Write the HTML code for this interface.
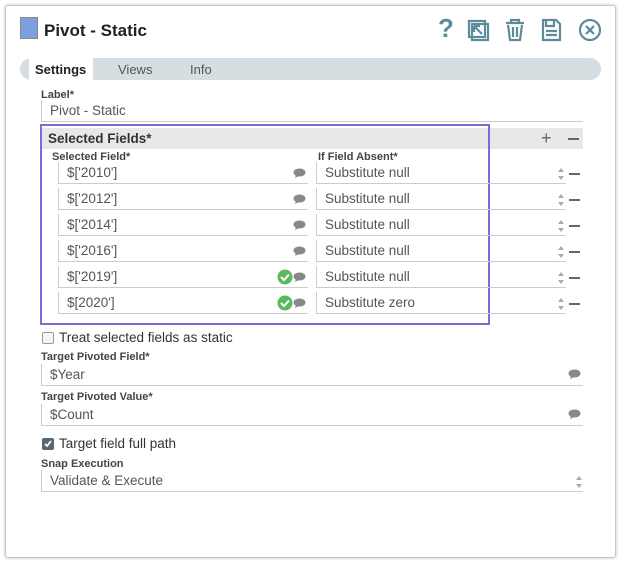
<!DOCTYPE html><html><head><meta charset="utf-8"><style>
*{box-sizing:border-box;margin:0;padding:0}
body{width:622px;height:563px;background:#fff;font-family:"Liberation Sans",sans-serif;position:relative;overflow:hidden}
.dlg{position:absolute;left:5px;top:5px;width:611px;height:553px;border:1px solid #c8c8c8;border-radius:3px;box-shadow:0 0 3px rgba(0,0,0,.25);background:#fff}
.a{position:absolute}
.lbl{position:absolute;font-size:11px;font-weight:bold;color:#444}
.inp{position:absolute;border-left:1px solid #ccc;border-bottom:1px solid #ccc;height:22px;font-size:13.5px;color:#555;padding-left:8px;line-height:22px}
.bub{position:absolute;width:13px;height:10px}
.sp{position:absolute;width:8px;height:14px}
.mn{position:absolute;width:11px;height:2px;background:#666}
.cb{position:absolute;width:12px;height:12px;border:1px solid #999;border-radius:2px;background:#f4f6f8}
.ck{position:absolute}
</style></head><body>
<div class="dlg"></div>
<div class="a" style="left:20px;top:17px;width:18px;height:22px;background:#7b9fe0;border:1px solid #888"></div>
<div class="a" style="left:44px;top:21px;font-size:17px;font-weight:bold;color:#222">Pivot - Static</div>
<svg class="a" style="left:436px;top:16px" width="170" height="28" viewBox="0 0 170 28" fill="none" stroke="#5f8a99" stroke-width="2.2">
<text x="2" y="21" font-size="26" font-family="Liberation Sans" font-weight="bold" fill="#5f8a99" stroke="none">?</text>
<rect x="33" y="5" width="16" height="16"/><rect x="36" y="8" width="16" height="16"/><path d="M46 18 L38 10 M38 10 h6 M38 10 v6"/>
<path d="M70 7 h18 M75 7 v-3 h8 v3 M72 9 l2 15 h10 l2 -15 M77 11 v10 M81 11 v10"/>
<path d="M107 4 h13 l4 4 v16 h-17z M110 4 v6 h8 v-6 M110 15 h11 M110 19 h11"/>
<circle cx="154" cy="14" r="10"/><path d="M150 10 l8 8 M158 10 l-8 8"/>
</svg>
<div class="a" style="left:20px;top:58px;width:581px;height:22px;background:#d6dee2;border-radius:11px"></div>
<div class="a" style="left:29px;top:58px;width:64px;height:22px;background:#fff"></div>
<div class="a" style="left:35px;top:62px;font-size:13px;font-weight:bold;color:#222">Settings</div>
<div class="a" style="left:118px;top:62px;font-size:13px;color:#555">Views</div>
<div class="a" style="left:190px;top:62px;font-size:13px;color:#555">Info</div>
<div class="lbl" style="left:41px;top:89px">Label*</div>
<div class="inp" style="left:41px;top:100px;width:542px">Pivot - Static</div>
<div class="a" style="left:42px;top:128px;width:541px;height:21px;background:#e8e8e8"></div>
<div class="a" style="left:48px;top:131px;font-size:13.5px;font-weight:bold;color:#333">Selected Fields*</div>
<div class="a" style="left:541px;top:128px;font-size:18px;color:#666">+</div>
<div class="mn" style="left:568px;top:138px"></div>
<div class="a" style="left:40px;top:124px;width:450px;height:201px;border:2px solid #7b6cd9"></div>
<div class="lbl" style="left:52px;top:151px">Selected Field*</div>
<div class="lbl" style="left:318px;top:151px">If Field Absent*</div>
<div id="rows"></div>
<script>
var d=[["$['2010']","Substitute null",0],["$['2012']","Substitute null",0],["$['2014']","Substitute null",0],["$['2016']","Substitute null",0],["$['2019']","Substitute null",1],["$[2020']","Substitute zero",1]];
var h="";
d.forEach(function(r,i){var t=162+i*26;
h+='<div class="inp" style="left:58px;top:'+t+'px;width:250px">'+r[0]+'</div>';
h+='<div class="inp" style="left:316px;top:'+t+'px;width:250px">'+r[1]+'</div>';
h+='<svg class="bub" style="left:293px;top:'+(t+6)+'px" viewBox="0 0 13 10"><ellipse cx="6.5" cy="4.5" rx="6" ry="4" fill="#888"/><path d="M3 7 l-1 3 l4 -2z" fill="#888"/></svg>';
if(r[2])h+='<svg class="a" style="left:277px;top:'+(t+3)+'px" width="16" height="16" viewBox="0 0 16 16"><circle cx="8" cy="8" r="7.5" fill="#5cb85c"/><path d="M4 8 l3 3 l5 -5.5" stroke="#fff" stroke-width="2" fill="none"/></svg>';
h+='<svg class="sp" style="left:557px;top:'+(t+5)+'px" viewBox="0 0 8 14"><path d="M1 5 l3 -4 l3 4z M1 9 l3 4 l3 -4z" fill="#aaa"/></svg>';
h+='<div class="mn" style="left:569px;top:'+(t+11)+'px"></div>';});
document.getElementById("rows").innerHTML=h;
</script>
<div class="cb" style="left:42px;top:332px"></div>
<div class="a" style="left:59px;top:330px;font-size:13.5px;color:#333">Treat selected fields as static</div>
<div class="lbl" style="left:41px;top:351px">Target Pivoted Field*</div>
<div class="inp" style="left:41px;top:364px;width:542px">$Year</div>
<svg class="bub" style="left:568px;top:369px" viewBox="0 0 13 10"><ellipse cx="6.5" cy="4.5" rx="6" ry="4" fill="#888"/><path d="M3 7 l-1 3 l4 -2z" fill="#888"/></svg>
<div class="lbl" style="left:41px;top:391px">Target Pivoted Value*</div>
<div class="inp" style="left:41px;top:404px;width:542px">$Count</div>
<svg class="bub" style="left:568px;top:409px" viewBox="0 0 13 10"><ellipse cx="6.5" cy="4.5" rx="6" ry="4" fill="#888"/><path d="M3 7 l-1 3 l4 -2z" fill="#888"/></svg>
<div class="cb" style="left:42px;top:438px;background:#5a6770;border-color:#5a6770"></div>
<svg class="ck" style="left:43px;top:439px" width="10" height="10" viewBox="0 0 10 10"><path d="M2 5 l2 2 l4 -5" stroke="#fff" stroke-width="1.8" fill="none"/></svg>
<div class="a" style="left:59px;top:436px;font-size:13.5px;color:#333">Target field full path</div>
<div class="lbl" style="left:41px;top:458px">Snap Execution</div>
<div class="inp" style="left:41px;top:470px;width:542px">Validate &amp; Execute</div>
<svg class="sp" style="left:575px;top:475px" viewBox="0 0 8 14"><path d="M1 5 l3 -4 l3 4z M1 9 l3 4 l3 -4z" fill="#aaa"/></svg>
</body></html>
